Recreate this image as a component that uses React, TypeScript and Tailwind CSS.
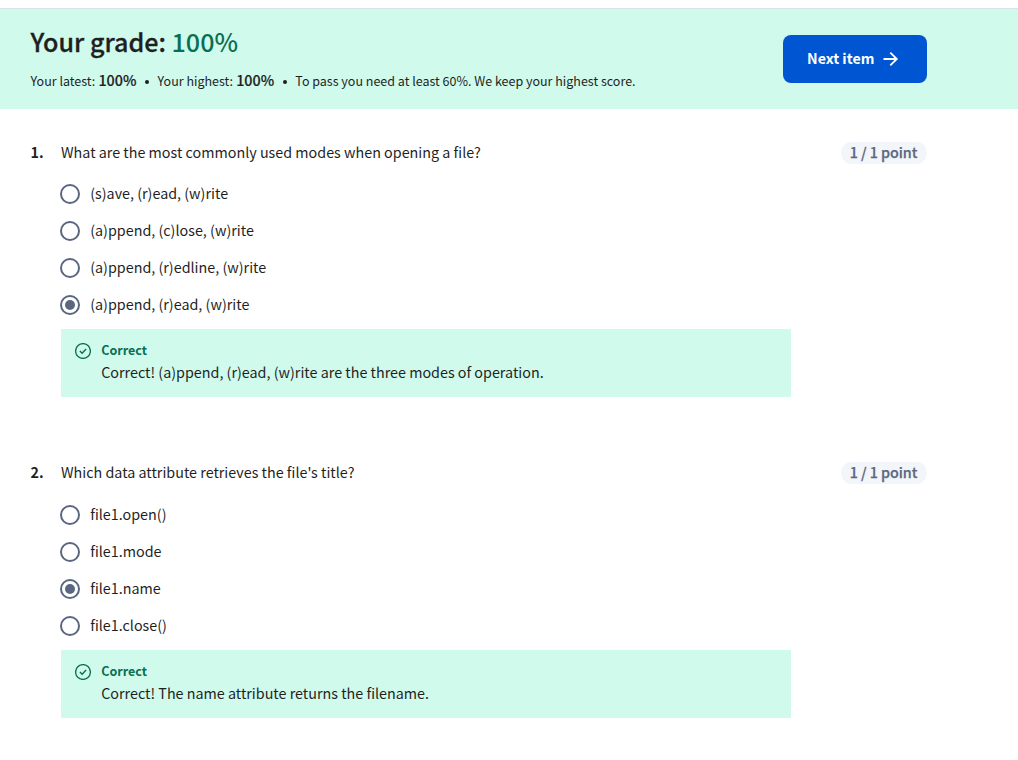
type Question = {
  number: string;
  prompt: string;
  options: string[];
  selected: number;
  feedback: string;
  optionsClass: string;
};

const questions: Question[] = [
  {
    number: "1.",
    prompt: "What are the most commonly used modes when opening a file?",
    options: [
      "(s)ave, (r)ead, (w)rite",
      "(a)ppend, (c)lose, (w)rite",
      "(a)ppend, (r)edline, (w)rite",
      "(a)ppend, (r)ead, (w)rite",
    ],
    selected: 3,
    feedback: "Correct! (a)ppend, (r)ead, (w)rite are the three modes of operation.",
    optionsClass: "mt-[10px]",
  },
  {
    number: "2.",
    prompt: "Which data attribute retrieves the file's title?",
    options: ["file1.open()", "file1.mode", "file1.name", "file1.close()"],
    selected: 2,
    feedback: "Correct! The name attribute returns the filename.",
    optionsClass: "mt-[11px]",
  },
];

function ArrowIcon() {
  return (
    <svg className="ml-[7px] h-5 w-5" viewBox="0 0 20 20" fill="none" stroke="currentColor" strokeWidth="1.8">
      <path d="M2.5 10H15.8M9.3 3.6L15.8 10L9.3 16.4" />
    </svg>
  );
}

function CheckIcon() {
  return (
    <svg className="mt-[5px] h-4 w-4 shrink-0" viewBox="0 0 16 16" fill="none" stroke="#087051">
      <circle cx="8" cy="8" r="7.4" strokeWidth="1.3" />
      <path d="M4.9 8.1L7.1 10.2L11.1 6" strokeWidth="1.4" />
    </svg>
  );
}

function Bullet() {
  return (
    <span className="flex w-[21.2px] items-center justify-center">
      <span className="mt-0.5 h-1 w-1 rounded-full bg-[#1f1f1f]" />
    </span>
  );
}

function Radio({ checked }: { checked: boolean }) {
  return (
    <span className="flex h-5 w-5 shrink-0 items-center justify-center rounded-full border-2 border-[#5b6780] bg-white">
      {checked && <span className="h-2.5 w-2.5 rounded-full bg-[#5b6780]" />}
    </span>
  );
}

function QuestionBlock({ q }: { q: Question }) {
  return (
    <section className="flex pl-[30.5px]">
      <div className="w-[30.5px] shrink-0 font-bold leading-6">{q.number}</div>
      <div className="w-[730px] shrink-0">
        <div className="leading-6">{q.prompt}</div>
        <div className={`-ml-px flex flex-col gap-[13px] pb-[6px] pt-2 ${q.optionsClass}`}>
          {q.options.map((option, i) => (
            <label key={option} className="flex h-6 items-center gap-[10.2px]">
              <Radio checked={i === q.selected} />
              <span className="-mt-0.5 leading-6">{option}</span>
            </label>
          ))}
        </div>
        <div className="mt-[6px] flex h-[68px] gap-[10.2px] bg-[#d0faec] pl-3.5 pt-[9px]">
          <CheckIcon />
          <div>
            <div className="text-[12.5px] font-bold leading-6 text-[#087051]">Correct</div>
            <div className="-mt-[1px] leading-[22px]">{q.feedback}</div>
          </div>
        </div>
      </div>
      <div className="ml-[50px] mt-[2px] flex h-[22px] w-[86px] items-center justify-center rounded-full bg-[#f2f5fa] pr-px font-medium text-[#5b6780] [-webkit-text-stroke:0.25px_#5b6780]">
        <span className="-mt-0.5 tracking-[-0.06px]">1 / 1 point</span>
      </div>
    </section>
  );
}

export default function App() {
  return (
    <main className="h-[760px] overflow-hidden bg-white font-['Noto_Sans_CJK_SC','Noto_Sans',sans-serif] text-[14.33px] text-[#1f1f1f]">
      <header className="mt-2 flex h-[101px] justify-between border-t border-[#dae1ed] bg-[#d0faec] pl-[30.5px] pr-[91px]">
        <div className="pt-[14px]">
          <h1 className="text-[25.08px] font-medium leading-9">
            <span className="[-webkit-text-stroke:0.3px_#1f1f1f]">Your grade:</span>{" "}
            <span className="text-[#087051]">100%</span>
          </h1>
          <p className="mt-[12px] flex text-[12.5px] leading-5">
            <span className="whitespace-pre">Your latest: </span>
            <b className="-mt-px ml-[0.4px] text-[14.33px] font-medium [-webkit-text-stroke:0.2px_#1f1f1f]">100%</b>
            <Bullet />
            <span className="whitespace-pre">Your highest: </span>
            <b className="-mt-px ml-[0.4px] text-[14.33px] font-medium [-webkit-text-stroke:0.2px_#1f1f1f]">100%</b>
            <Bullet />
            <span>To pass you need at least 60%. We keep your highest score.</span>
          </p>
        </div>
        <button className="mt-[26px] flex h-12 w-36 items-center rounded-lg bg-[#0056d2] pl-6 text-[14.2px] font-bold text-white">
          <span className="-mt-px leading-[21px]">Next item</span>
          <ArrowIcon />
        </button>
      </header>
      <div className="flex flex-col gap-[63px] pt-[31px]">
        {questions.map((q) => (
          <QuestionBlock key={q.number} q={q} />
        ))}
      </div>
    </main>
  );
}
